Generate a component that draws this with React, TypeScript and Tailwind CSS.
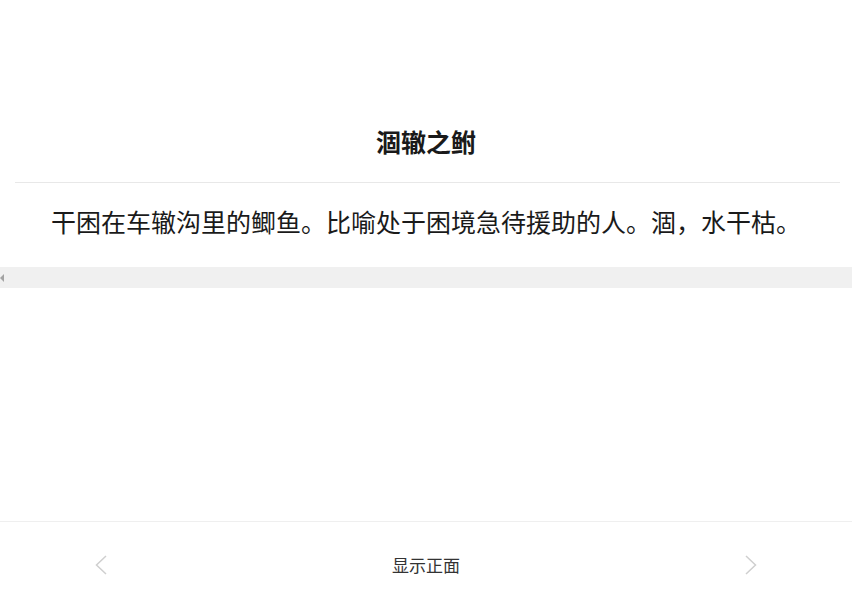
import React from 'react';

const font = { fontFamily: '"Noto Sans CJK SC", "Noto Sans", sans-serif' };

function Chevron({ dir }: { dir: 'left' | 'right' }) {
  return (
    <svg width="12" height="20" viewBox="0 0 12 20" fill="none">
      <polyline
        points={dir === 'left' ? '11,1 1.5,10 11,19' : '1,1 10.5,10 1,19'}
        stroke="#cfcfcf"
        strokeWidth="1.5"
      />
    </svg>
  );
}

export default function App() {
  return (
    <div className="h-[602px] w-full flex flex-col bg-white text-[#1a1a1a]" style={font}>
      {/* Card content */}
      <div className="flex-1 flex flex-col">
        <h1 className="pt-[123px] text-center text-[25px] leading-[36px] font-bold">涸辙之鲋</h1>
        <div className="mt-[23px] ml-[15px] mr-[12px] border-t border-[#e8e8e8]" />
        <p className="pt-[20px] text-center text-[25px] leading-[36px]">
          干困在车辙沟里的鲫鱼。比喻处于困境急待援助的人。涸，水干枯。
        </p>
        {/* Horizontal scrollbar */}
        <div className="mt-[28px] h-[21px] bg-[#f0f0f0] flex items-center">
          <div className="w-0 h-0 border-y-[4px] border-y-transparent border-r-[4px] border-r-[#a3a3a3]" />
        </div>
      </div>

      {/* Footer nav */}
      <div className="h-[81px] border-t border-[#efefef] flex items-center justify-between pl-[95px] pr-[95px] pt-[5px]">
        <Chevron dir="left" />
        <span className="text-[17px] text-[#333]">显示正面</span>
        <Chevron dir="right" />
      </div>
    </div>
  );
}
